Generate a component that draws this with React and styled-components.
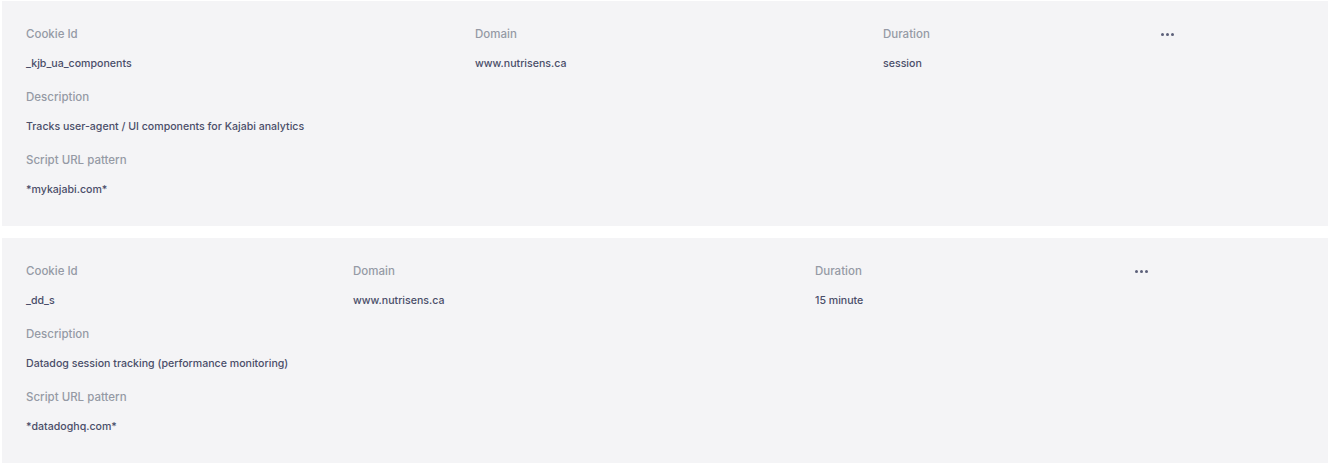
import React from "react";
import styled, { createGlobalStyle } from "styled-components";

const GlobalStyle = createGlobalStyle`
  body {
    margin: 0;
    background: #ffffff;
    font-family: Inter, "Liberation Sans", sans-serif;
  }
`;

const Wrapper = styled("div")`
  display: flex;
  flex-direction: column;
  gap: 12px;
  padding: 1px 2px;
`;

const Card = styled("div")`
  background: #f4f4f6;
  padding: 25px 24px 28px 24px;
  display: flex;
  flex-direction: column;
  gap: 17px;
`;

const TopRow = styled("div")`
  display: grid;
  grid-template-columns: ${props => props.columns};
`;

const Field = styled("div")`
  display: flex;
  flex-direction: column;
  gap: 14px;
`;

const Label = styled("div")`
  font-size: 11.5px;
  line-height: 16px;
  font-weight: 500;
  color: #959aa5;
`;

const Value = styled("div")`
  font-size: 10.6px;
  line-height: 16px;
  font-weight: 500;
  color: #4a4e69;
`;

const MoreButton = styled("div")`
  display: flex;
  gap: 2px;
  height: 16px;
  align-items: center;
`;

const Dot = styled("span")`
  width: 3px;
  height: 3px;
  border-radius: 50%;
  background: #5c6079;
`;

const cookies = [
  {
    id: "_kjb_ua_components",
    domain: "www.nutrisens.ca",
    duration: "session",
    description: "Tracks user-agent / UI components for Kajabi analytics",
    pattern: "*mykajabi.com*",
    columns: "449px 408px 278px 1fr"
  },
  {
    id: "_dd_s",
    domain: "www.nutrisens.ca",
    duration: "15 minute",
    description: "Datadog session tracking (performance monitoring)",
    pattern: "*datadoghq.com*",
    columns: "327px 462px 320px 1fr"
  }
];

function CookieCard({ cookie }) {
  return (
    <Card>
      <TopRow columns={cookie.columns}>
        <Field>
          <Label>Cookie Id</Label>
          <Value>{cookie.id}</Value>
        </Field>
        <Field>
          <Label>Domain</Label>
          <Value>{cookie.domain}</Value>
        </Field>
        <Field>
          <Label>Duration</Label>
          <Value>{cookie.duration}</Value>
        </Field>
        <MoreButton>
          <Dot />
          <Dot />
          <Dot />
        </MoreButton>
      </TopRow>
      <Field>
        <Label>Description</Label>
        <Value>{cookie.description}</Value>
      </Field>
      <Field>
        <Label>Script URL pattern</Label>
        <Value>{cookie.pattern}</Value>
      </Field>
    </Card>
  );
}

export default function App() {
  return (
    <Wrapper>
      <GlobalStyle />
      {cookies.map(c => (
        <CookieCard key={c.id} cookie={c} />
      ))}
    </Wrapper>
  );
}
